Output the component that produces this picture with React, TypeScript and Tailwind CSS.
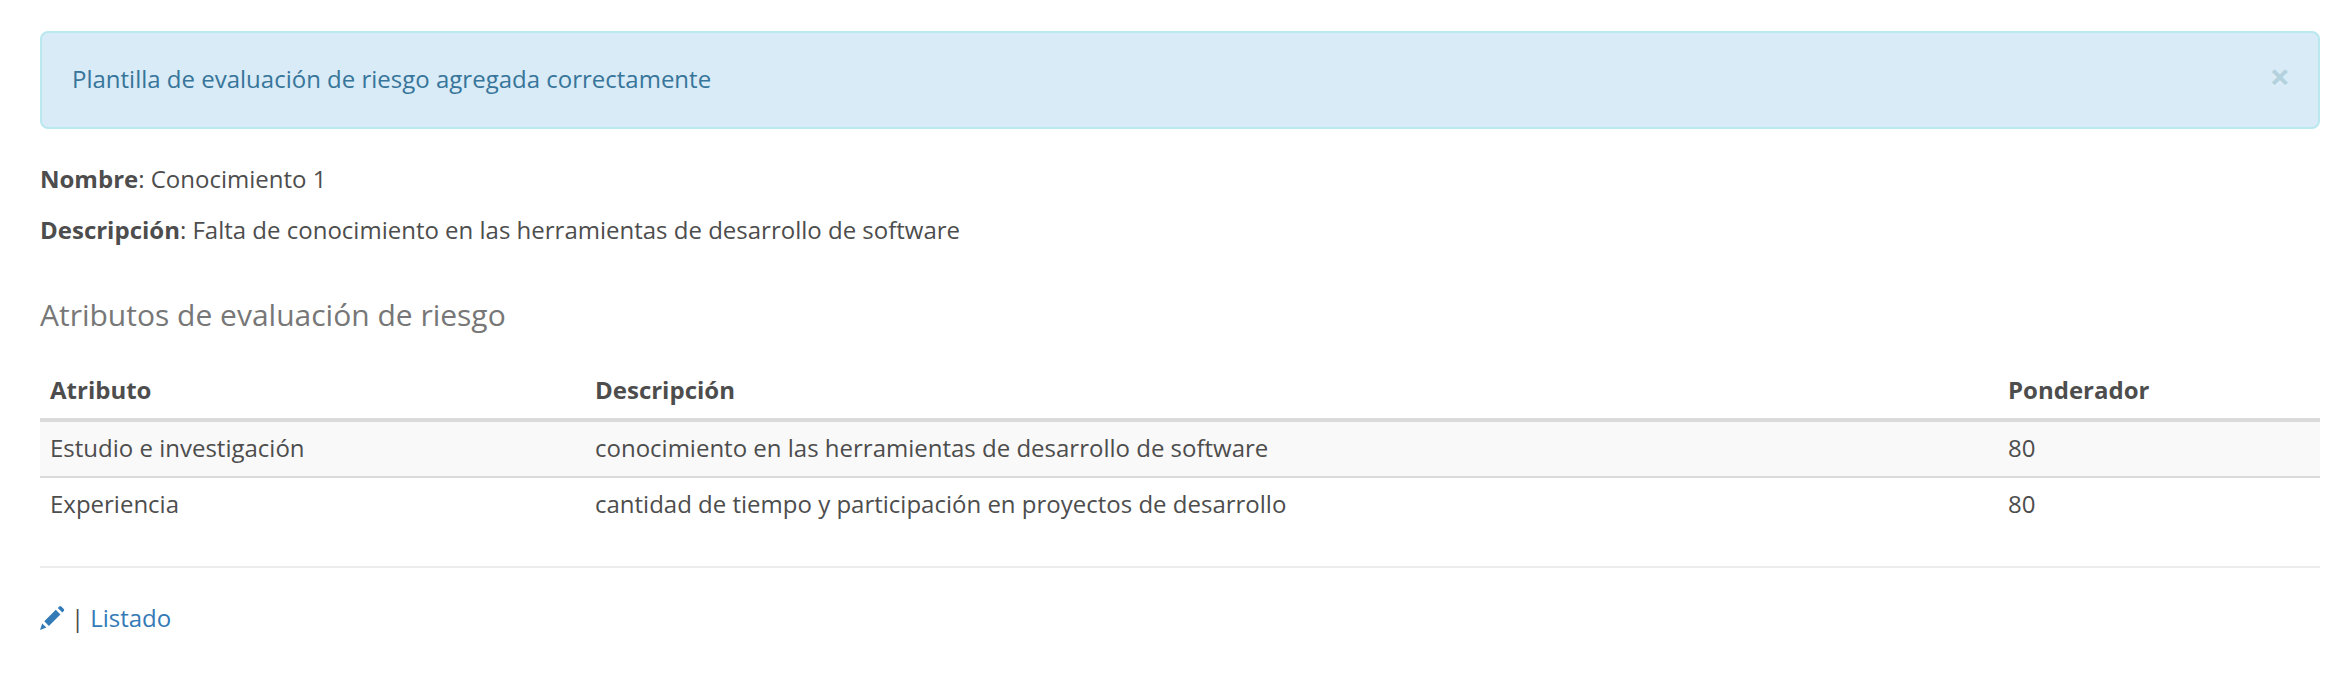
const rows = [
  { name: "Estudio e investigación", description: "conocimiento en las herramientas de desarrollo de software", weight: 80 },
  { name: "Experiencia", description: "cantidad de tiempo y participación en proyectos de desarrollo", weight: 80 },
];

function Pencil() {
  return (
    <svg className="size-6 shrink-0 overflow-visible" viewBox="0 0 24 24" fill="currentColor" aria-hidden="true">
      <path d="M19.3.5Q20.3-.4 21.3.5L23.8 3Q24.7 4 23.8 5L22.3 6.5 17.8 2ZM15.8 3.8 20.4 8.4 8.9 19.9 4.3 15.3ZM2.2 17.4 6.4 21.6 0 24Z" />
    </svg>
  );
}

export default function App() {
  return (
    <main className="h-[678px] bg-white pr-3 pl-10 pt-[31px] font-['Open_Sans',sans-serif] text-[24px] leading-[34px] text-[#4d4d4d]">
      <div className="flex h-[98px] items-start justify-between rounded-[8px] border-2 border-[#b9e8ef] bg-[#d8ebf6] pt-[29px] pr-[28px] pl-[30px] text-[#37759a]">
        <p>Plantilla de evaluación de riesgo agregada correctamente</p>
        <button className="mt-px text-[36px] leading-[28px] font-bold text-[#b4d1de] [text-shadow:0_2px_0_#ffffff33]">×</button>
      </div>
      <p className="mt-[33px]"><strong>Nombre</strong>: Conocimiento 1</p>
      <p className="mt-[17px]"><strong>Descripción</strong>: Falta de conocimiento en las herramientas de desarrollo de software</p>
      <h2 className="mt-[51px] text-[30px] text-[#777777]">Atributos de evaluación de riesgo</h2>
      <table className="mt-[41px] w-full table-fixed border-separate border-spacing-0 text-left">
        <colgroup>
          <col className="w-[545px]" />
          <col className="w-[1413px]" />
          <col />
        </colgroup>
        <thead>
          <tr className="*:border-b-4 *:border-[#dbdbdb] *:px-[10px] *:pb-[11px]">
            <th>Atributo</th>
            <th>Descripción</th>
            <th>Ponderador</th>
          </tr>
        </thead>
        <tbody>
          {rows.map((row) => (
            <tr key={row.name} className="*:border-[#dbdbdb] *:px-[10px] *:pt-[9px] *:pb-[11px] odd:bg-[#f9f9f9] odd:*:border-b-2">
              <td>{row.name}</td>
              <td>{row.description}</td>
              <td>{row.weight}</td>
            </tr>
          ))}
        </tbody>
      </table>
      <hr className="mt-[34px] border-t-2 border-[#ececec]" />
      <div className="mt-[33px] flex items-center">
        <a className="text-[#337ab7]"><Pencil /></a>
        <span className="mr-[6px] ml-[7px]">|</span>
        <a className="text-[#337ab7]">Listado</a>
      </div>
    </main>
  );
}
